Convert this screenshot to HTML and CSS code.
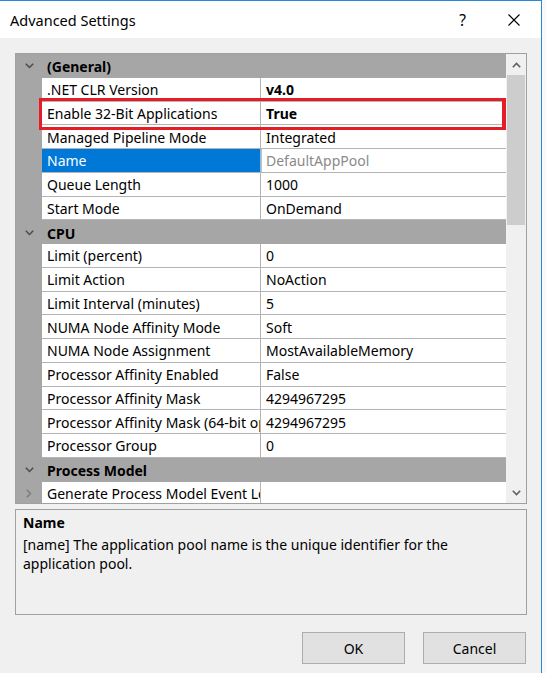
FILE: index.html
```html
<!DOCTYPE html>
<html>
<head>
<meta charset="utf-8">
<link rel="stylesheet" href="styles.css">
</head>
<body>
<div class="screen">
  <div class="dialog">
    <div class="titlebar">
      <span class="title">Advanced Settings</span>
      <span class="help">?</span>
      <svg class="close" width="12" height="12" viewBox="0 0 12 12"><path d="M0.5 0.5 L11.5 11.5 M11.5 0.5 L0.5 11.5" stroke="#000" stroke-width="1.1" fill="none"/></svg>
    </div>
    <div class="body">
      <div class="grid">
        <div class="rows">
          <div class="cat"><span class="chev"><svg width="9" height="6" viewBox="0 0 9 6"><path d="M0.8 0.8 L4.5 4.5 L8.2 0.8" stroke="#4a4a4a" stroke-width="1.5" fill="none"/></svg></span><span class="cat-label">(General)</span></div>
          <div class="row"><span class="margin"></span><span class="name">.NET CLR Version</span><span class="value bold">v4.0</span></div>
          <div class="row"><span class="margin"></span><span class="name">Enable 32-Bit Applications</span><span class="value bold">True</span></div>
          <div class="row"><span class="margin"></span><span class="name">Managed Pipeline Mode</span><span class="value">Integrated</span></div>
          <div class="row selected"><span class="margin"></span><span class="name">Name</span><span class="value readonly">DefaultAppPool</span></div>
          <div class="row"><span class="margin"></span><span class="name">Queue Length</span><span class="value">1000</span></div>
          <div class="row"><span class="margin"></span><span class="name">Start Mode</span><span class="value">OnDemand</span></div>
          <div class="cat"><span class="chev"><svg width="9" height="6" viewBox="0 0 9 6"><path d="M0.8 0.8 L4.5 4.5 L8.2 0.8" stroke="#4a4a4a" stroke-width="1.5" fill="none"/></svg></span><span class="cat-label">CPU</span></div>
          <div class="row"><span class="margin"></span><span class="name">Limit (percent)</span><span class="value">0</span></div>
          <div class="row"><span class="margin"></span><span class="name">Limit Action</span><span class="value">NoAction</span></div>
          <div class="row"><span class="margin"></span><span class="name">Limit Interval (minutes)</span><span class="value">5</span></div>
          <div class="row"><span class="margin"></span><span class="name">NUMA Node Affinity Mode</span><span class="value">Soft</span></div>
          <div class="row"><span class="margin"></span><span class="name">NUMA Node Assignment</span><span class="value">MostAvailableMemory</span></div>
          <div class="row"><span class="margin"></span><span class="name">Processor Affinity Enabled</span><span class="value">False</span></div>
          <div class="row"><span class="margin"></span><span class="name">Processor Affinity Mask</span><span class="value">4294967295</span></div>
          <div class="row"><span class="margin"></span><span class="name">Processor Affinity Mask (64-bit option)</span><span class="value">4294967295</span></div>
          <div class="row"><span class="margin"></span><span class="name">Processor Group</span><span class="value">0</span></div>
          <div class="cat"><span class="chev"><svg width="9" height="6" viewBox="0 0 9 6"><path d="M0.8 0.8 L4.5 4.5 L8.2 0.8" stroke="#4a4a4a" stroke-width="1.5" fill="none"/></svg></span><span class="cat-label">Process Model</span></div>
          <div class="row"><span class="margin"><svg width="6" height="9" viewBox="0 0 6 9"><path d="M0.8 0.8 L4.5 4.5 L0.8 8.2" stroke="#7a7a7a" stroke-width="1.4" fill="none"/></svg></span><span class="name">Generate Process Model Event Log Entry</span><span class="value"></span></div>
          <div class="highlight"></div>
        </div>
        <div class="scrollbar">
          <div class="sb-btn"><svg width="9" height="6" viewBox="0 0 9 6"><path d="M0.8 5.2 L4.5 1.5 L8.2 5.2" stroke="#606060" stroke-width="1.6" fill="none"/></svg></div>
          <div class="sb-track"><div class="sb-thumb"></div></div>
          <div class="sb-btn"><svg width="9" height="6" viewBox="0 0 9 6"><path d="M0.8 0.8 L4.5 4.5 L8.2 0.8" stroke="#606060" stroke-width="1.6" fill="none"/></svg></div>
        </div>
      </div>
      <div class="desc">
        <div class="desc-title">Name</div>
        <div class="desc-text">[name] The application pool name is the unique identifier for the application pool.</div>
      </div>
      <div class="buttons">
        <button class="btn">OK</button>
        <button class="btn">Cancel</button>
      </div>
    </div>
  </div>
</div>
</body>
</html>
```

FILE: styles.css
```css
html, body {
  margin: 0;
  padding: 0;
}
body {
  background: #f6f9fc;
  font-family: "Noto Sans", "DejaVu Sans", sans-serif;
  color: #000;
}
.screen {
  width: 546px;
  height: 673px;
  overflow: hidden;
}
.dialog {
  box-sizing: border-box;
  width: 542px;
  height: 673px;
  background: #f0f0f0;
  border-top: 1px solid #2b86d6;
  border-right: 1px solid #2b86d6;
  display: flex;
  flex-direction: column;
}
.titlebar {
  height: 37px;
  flex: none;
  background: #fff;
  display: flex;
  align-items: center;
}
.title {
  margin-left: 10px;
  font-size: 14.5px;
}
.help {
  margin-left: auto;
  margin-right: 42px;
  font-size: 15.5px;
}
.close {
  margin-right: 21px;
  margin-top: 1px;
}
.body {
  padding: 15px 0 0 15px;
  display: flex;
  flex-direction: column;
}
.grid {
  box-sizing: border-box;
  width: 512px;
  height: 451px;
  border: 1px solid #a0a0a0;
  display: flex;
  background: #fff;
}
.rows {
  width: 490px;
  height: 449px;
  overflow: hidden;
  position: relative;
  font-size: 14px;
}
.cat {
  height: 23.75px;
  background: #a6a6a6;
  display: flex;
  align-items: center;
  font-weight: bold;
}
.chev {
  width: 26px;
  display: flex;
  justify-content: center;
  margin-top: 1px;
}
.cat-label {
  padding-left: 5px;
  padding-top: 2px;
}
.row {
  height: 23.75px;
  display: grid;
  grid-template-columns: 26px 219px 245px;
}
.margin {
  background: #a6a6a6;
  display: flex;
  align-items: center;
  justify-content: center;
}
.name, .value {
  box-sizing: border-box;
  background: #fff;
  border-bottom: 1px solid #b4b4b4;
  padding-left: 5px;
  padding-top: 2px;
  white-space: nowrap;
  overflow: hidden;
  display: flex;
  align-items: center;
  line-height: 1;
}
.name {
  border-right: 1px solid #b4b4b4;
}
.bold {
  font-weight: bold;
}
.selected .name {
  background: #0078d7;
  color: #fff;
}
.readonly {
  color: #8a8a8a;
  box-shadow: inset 1px 0 0 #9cc6ea;
}
.highlight {
  position: absolute;
  left: 23px;
  top: 44px;
  width: 467px;
  height: 32px;
  box-sizing: border-box;
  border: 3px solid #e51d27;
  border-right-width: 4px;
}
.scrollbar {
  width: 20px;
  height: 449px;
  background: #f0f0f0;
  display: flex;
  flex-direction: column;
}
.sb-btn {
  height: 21px;
  flex: none;
  display: flex;
  align-items: center;
  justify-content: center;
}
.sb-track {
  flex: 1;
  padding: 0 1px;
}
.sb-thumb {
  height: 150px;
  background: #cdcdcd;
}
.desc {
  box-sizing: border-box;
  margin-top: 5px;
  width: 512px;
  height: 106px;
  border: 1px solid #a0a0a0;
  padding: 3px 7px 0 7px;
  font-size: 14px;
  line-height: 19.5px;
}
.desc-title {
  font-weight: bold;
  margin-bottom: 2px;
}
.buttons {
  display: flex;
  justify-content: flex-end;
  gap: 18px;
  width: 511px;
  margin-top: 17px;
}
.btn {
  width: 103px;
  height: 32px;
  background: #e1e1e1;
  border: 1px solid #adadad;
  font-family: "Noto Sans", "DejaVu Sans", sans-serif;
  font-size: 14px;
  color: #000;
  padding: 0;
}
```
